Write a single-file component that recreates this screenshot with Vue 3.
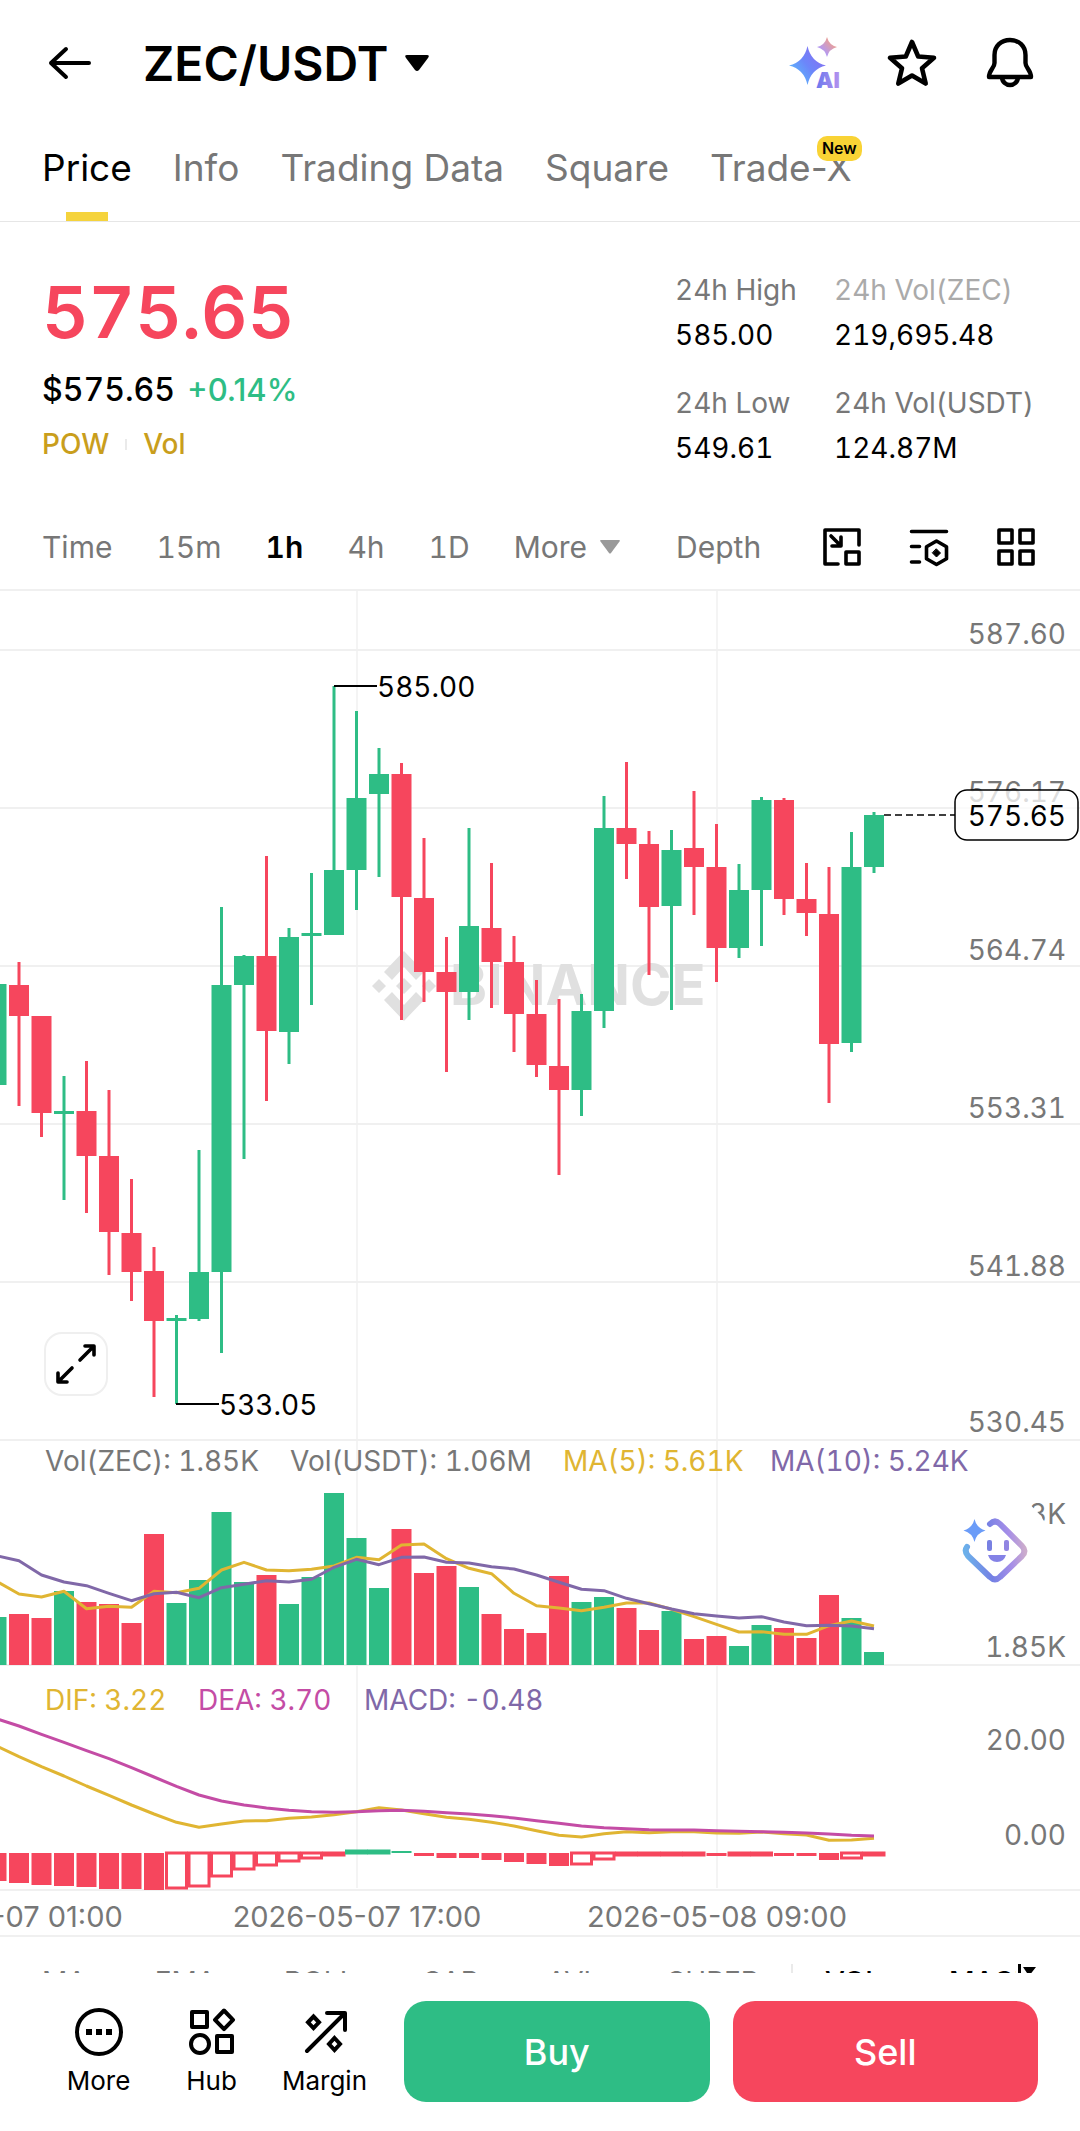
<script setup>
const tabs = ['Price', 'Info', 'Trading Data', 'Square', 'Trade-X']
const stats = [
  { label: '24h High', value: '585.00' },
  { label: '24h Vol(ZEC)', value: '219,695.48', faded: true },
  { label: '24h Low', value: '549.61' },
  { label: '24h Vol(USDT)', value: '124.87M' },
]
const intervals = ['Time', '15m', '1h', '4h', '1D']
const overlays = ['MA', 'EMA', 'BOLL', 'SAR', 'AVL', 'SUPER']

const UP = '#2ebd85'
const DOWN = '#f6465d'
const STEP = 22.5
const centre = (i) => 874 - (39 - i) * STEP

// [direction, high, body top, body bottom, low]
const candles = [
  [1, 984, 984, 1085, 1085], [0, 962, 985, 1016, 1106], [0, 1016, 1016, 1113, 1137],
  [1, 1076, 1111, 1114, 1200], [0, 1061, 1111, 1156, 1213], [0, 1090, 1156, 1232, 1275],
  [0, 1179, 1233, 1272, 1301], [0, 1247, 1271, 1321, 1397], [1, 1315, 1318, 1321, 1404],
  [1, 1150, 1272, 1319, 1321], [1, 907, 985, 1272, 1353], [1, 955, 956, 985, 1159],
  [0, 856, 956, 1031, 1101], [1, 928, 937, 1032, 1064], [1, 873, 933, 936, 1005],
  [1, 686, 870, 935, 935], [1, 711, 798, 870, 910], [1, 748, 774, 794, 877],
  [0, 763, 774, 897, 1020], [0, 838, 898, 972, 1002], [0, 937, 972, 992, 1072],
  [1, 828, 926, 992, 1020], [0, 863, 928, 962, 1008], [0, 936, 962, 1014, 1052],
  [0, 980, 1014, 1065, 1077], [0, 999, 1066, 1090, 1175], [1, 994, 1011, 1090, 1116],
  [1, 796, 828, 1011, 1028], [0, 762, 828, 844, 879], [0, 831, 844, 907, 975],
  [1, 830, 850, 906, 1010], [0, 791, 848, 867, 915], [0, 824, 867, 948, 982],
  [1, 864, 890, 948, 958], [1, 797, 800, 890, 946], [0, 798, 800, 899, 915],
  [0, 863, 899, 913, 936], [0, 867, 914, 1044, 1103], [1, 832, 867, 1043, 1052],
  [1, 812, 815, 867, 873],
].map(([up, high, top, bottom, low], i) => ({
  x: centre(i), color: up ? UP : DOWN, high, top, bottom, low,
}))

const volumes = [
  48, 51, 47, 74, 63, 61, 42, 131, 62, 85, 153, 83, 90, 61, 88, 172, 127, 77, 136, 92,
  99, 78, 51, 36, 32, 89, 63, 68, 57, 35, 54, 26, 29, 19, 40, 37, 27, 70, 47, 13,
]

const line = (base, values) =>
  values.map((v, i) => `${centre(i)},${(base + v / 3).toFixed(1)}`).join(' ')

const ma5 = line(1430, [
  454, 492, 501, 484, 536, 529, 532, 484, 488, 475, 420, 397, 420, 422, 418, 408, 382, 389, 345, 342,
  386, 415, 431, 490, 527, 534, 542, 532, 519, 519, 538, 560, 583, 606, 605, 613, 613, 587, 573, 588,
])
const ma10 = line(1430, [
  377, 392, 435, 456, 467, 490, 512, 491, 487, 503, 473, 463, 452, 456, 448, 412, 388, 404, 382, 381,
  397, 399, 410, 417, 435, 457, 478, 482, 505, 521, 537, 551, 558, 564, 560, 576, 587, 586, 588, 596,
])
const dif = line(1680, [
  198, 230, 260, 288, 318, 346, 375, 402, 427, 442, 432, 423, 422, 415, 411, 404, 395, 383, 390, 401,
  412, 418, 427, 438, 452, 466, 471, 461, 455, 458, 455, 455, 459, 460, 456, 461, 465, 481, 480, 475,
])
const dea = line(1680, [
  116, 138, 163, 187, 212, 236, 263, 291, 319, 345, 363, 375, 384, 391, 395, 397, 395, 392, 391, 394,
  398, 402, 407, 414, 422, 430, 438, 443, 446, 449, 450, 450, 452, 454, 455, 457, 459, 462, 466, 468,
])

// [height, hollow]; a negative height rises above the zero line
const histogram = [
  [28], [30], [32], [33], [34], [36], [36], [37], [35, 1], [33, 1], [23, 1], [16, 1], [12, 1], [8, 1],
  [5, 1], [2, 1], [-2, 1], [-2, 1], [-2], [3], [5], [5], [7], [9], [11], [13], [11, 1], [6, 1], [2, 1],
  [2, 1], [2, 1], [2, 1], [3], [2, 1], [2, 1], [3], [3], [7], [5, 1], [2, 1],
].map(([h, hollow], i) => ({
  x: centre(i) - 10,
  y: h < 0 ? 1853 + h : 1853,
  h: Math.abs(h),
  color: h < 0 ? UP : DOWN,
  hollow,
}))

const priceAxis = [
  [650, 644, '587.60'], [808, 802, '576.17'], [966, 960, '564.74'],
  [1124, 1118, '553.31'], [1282, 1276, '541.88'], [1440, 1432, '530.45'],
]
</script>

<template>
  <div class="app">
    <main class="content">
      <header class="topbar">
        <button class="icon-btn" aria-label="Back">
          <svg width="52" height="52" viewBox="0 0 52 52" fill="none" stroke="#000" stroke-width="4" stroke-linecap="round" stroke-linejoin="round">
            <path d="M47 26H9M24 12 9 26l15 14" />
          </svg>
        </button>
        <button class="pair">
          ZEC/USDT
          <svg width="26" height="18" viewBox="0 0 26 18"><path d="M3 1h20q3 0 1 3L15 16q-2 2-4 0L2 4Q0 1 3 1z" /></svg>
        </button>
        <div class="actions">
          <button class="icon-btn" aria-label="AI">
            <svg width="52" height="52" viewBox="0 0 52 52" overflow="visible">
              <defs>
                <linearGradient id="ai-main" x1="0" y1="1" x2="1" y2="0.2">
                  <stop offset="0.1" stop-color="#5ac0fb" /><stop offset="0.55" stop-color="#6c86fa" /><stop offset="1" stop-color="#8a6cf0" />
                </linearGradient>
                <linearGradient id="ai-small" x1="0" y1="1" x2="1" y2="0">
                  <stop offset="0.3" stop-color="#b59af0" /><stop offset="0.8" stop-color="#f0a08c" />
                </linearGradient>
                <linearGradient id="ai-text" x1="0" y1="0" x2="1" y2="0">
                  <stop offset="0" stop-color="#6a78ee" /><stop offset="1" stop-color="#b592ee" />
                </linearGradient>
              </defs>
              <path fill="url(#ai-main)" d="M19.500 9Q23 25 38 28.500Q23 32 19.500 48Q16 32 1 28.500Q16 25 19.500 9z" />
              <path fill="url(#ai-small)" d="M39 0q2 8 10 10q-8 2-10 10q-2-8-10-10q8-2 10-10z" />
              <text x="28" y="51" font-size="22" font-weight="900" fill="url(#ai-text)" stroke="#fff" stroke-width="3" paint-order="stroke">AI</text>
            </svg>
          </button>
          <button class="icon-btn" aria-label="Add to favourites">
            <svg width="52" height="52" viewBox="0 0 52 52" fill="none" stroke="#000" stroke-width="4.600" stroke-linejoin="round">
              <path d="M26 5l6.200 14.500 15.800 1.300-12 10.400 3.700 15.400L26 38.500 12.300 46.600 16 31.200 4 20.800l15.800-1.300z" />
            </svg>
          </button>
          <button class="icon-btn" aria-label="Alerts">
            <svg width="52" height="52" viewBox="0 0 52 52" fill="none" stroke="#000" stroke-width="4.400" stroke-linejoin="round">
              <path d="M26 3C17 3 10.500 9 10.500 18v8c0 5-5.500 7-5.500 14h42c0-7-5.500-9-5.500-14v-8C41.500 9 35 3 26 3z" />
              <path d="M18 40c0 5 4 8 8 8s8-3 8-8" />
            </svg>
          </button>
        </div>
      </header>

      <nav class="tabs">
        <a v-for="(t, i) in tabs" :key="t" href="#" class="tab" :class="{ active: i === 0 }">
          {{ t }}<span v-if="t === 'Trade-X'" class="badge">New</span>
        </a>
      </nav>

      <section class="summary">
        <div class="quote">
          <div class="last">575.65</div>
          <div class="fiat"><span>$575.65</span><span class="gain">+0.14%</span></div>
          <div class="tags"><a href="#">POW</a><i class="sep"></i><a href="#">Vol</a></div>
        </div>
        <dl class="stats">
          <div v-for="s in stats" :key="s.label" class="stat">
            <dt :class="{ faded: s.faded }">{{ s.label }}</dt>
            <dd>{{ s.value }}</dd>
          </div>
        </dl>
      </section>

      <div class="intervals">
        <button v-for="t in intervals" :key="t" class="interval" :class="{ active: t === '1h' }">{{ t }}</button>
        <button class="interval more">
          More
          <svg width="20" height="14" viewBox="0 0 20 14"><path fill="#999" d="M1 0h18q1.500 0 .5 1.500L11 13q-1 1-2 0L.5 1.500Q-.5 0 1 0z" /></svg>
        </button>
        <button class="interval depth">Depth</button>
        <div class="tools">
          <button class="icon-btn" aria-label="Floating window">
            <svg width="40" height="40" viewBox="0 0 40 40" fill="none" stroke="#000" stroke-width="3.600" stroke-linecap="round" stroke-linejoin="round">
              <path d="M37 18V3H3v34h13M9 9l9 9M10 19h9V10" /><rect x="24" y="25" width="13" height="12" />
            </svg>
          </button>
          <button class="icon-btn" aria-label="Chart settings">
            <svg width="40" height="40" viewBox="0 0 40 40" fill="none" stroke="#000" stroke-width="3.600" stroke-linecap="round" stroke-linejoin="round">
              <path d="M2.500 4.500h35M2.500 19.500h8M2.500 35h8M27.500 14l10 5.700v12l-10 5.800-10-5.800v-12z" />
              <path d="M27.500 22l4 4-4 4-4-4z" fill="#000" stroke-width="1" />
            </svg>
          </button>
          <button class="icon-btn" aria-label="Layout">
            <svg width="40" height="40" viewBox="0 0 40 40" fill="none" stroke="#000" stroke-width="3.600" stroke-linejoin="round">
              <rect x="3" y="3" width="13" height="13" /><rect x="24" y="3" width="13" height="13" />
              <rect x="3" y="24" width="13" height="13" /><rect x="24" y="24" width="13" height="13" />
            </svg>
          </button>
        </div>
      </div>

      <div class="chart">
        <svg class="plot" viewBox="0 589 1080 1348" role="img" aria-label="ZEC/USDT 1h chart">
          <g stroke="#f0f0f0" stroke-width="2">
            <line x1="0" x2="1080" y1="590" y2="590" />
            <line v-for="a in priceAxis" :key="a[0]" x1="0" x2="1080" :y1="a[0]" :y2="a[0]" />
            <line v-for="y in [1665, 1890, 1936]" :key="y" x1="0" x2="1080" :y1="y" :y2="y" />
            <line v-for="x in [357, 717]" :key="x" :x1="x" :x2="x" y1="590" y2="1888" stroke-width="1.500" />
          </g>

          <g fill="#e0e0e0">
            <path d="M404 951l20 21-8 8-12-13-12 13-8-8zM404 1021l20-21-8-8-12 13-12-13-8 8zM379 979l7 7-7 7-7-7zM429 979l7 7-7 7-7-7zM404 978l8 8-8 8-8-8z" />
            <text x="450" y="1005" class="mark">BINANCE</text>
          </g>

          <g class="axis">
            <text v-for="a in priceAxis" :key="a[2]" x="1066" :y="a[1]" text-anchor="end">{{ a[2] }}</text>
            <text x="1066" y="1524" text-anchor="end">3K</text>
            <text x="1066" y="1657" text-anchor="end">1.85K</text>
            <text x="1066" y="1750" text-anchor="end">20.00</text>
            <text x="1066" y="1845" text-anchor="end">0.00</text>
          </g>
          <g class="axis dates" text-anchor="middle">
            <text x="-3" y="1927">2026-05-07 01:00</text>
            <text x="357" y="1927">2026-05-07 17:00</text>
            <text x="717" y="1927">2026-05-08 09:00</text>
          </g>

          <g v-for="(c, i) in candles" :key="i" :fill="c.color">
            <rect :x="c.x - 1.5" :y="c.high" width="3" :height="c.low - c.high" />
            <rect :x="c.x - 10" :y="c.top" width="20" :height="c.bottom - c.top" />
            <rect :x="c.x - 10" :y="1665 - volumes[i]" width="20" :height="volumes[i]" />
          </g>

          <g class="lines">
            <polyline :points="ma5" stroke="#e0b532" />
            <polyline :points="ma10" stroke="#8068a8" />
            <polyline :points="dif" stroke="#e0b532" />
            <polyline :points="dea" stroke="#c44ca5" />
          </g>
          <rect
            v-for="(b, i) in histogram" :key="'h' + i" :x="b.x" :y="b.y" width="20" :height="b.h"
            :fill="b.hollow ? '#fff' : b.color" :stroke="b.hollow ? b.color : 'none'" stroke-width="3"
          />

          <g stroke="#000" stroke-width="2">
            <path d="M334 686h43M176 1404h43" />
            <path d="M884 815h71" stroke-width="1.500" stroke-dasharray="7 4" />
            <rect x="955" y="790" width="123" height="50" rx="12" fill="#fff" fill-opacity="0.75" stroke-width="1.500" />
          </g>
          <g class="price">
            <text x="377" y="697">585.00</text>
            <text x="219" y="1415">533.05</text>
            <text x="1066" y="826" text-anchor="end">575.65</text>
          </g>

          <g class="legend">
            <text x="45" y="1471" fill="#777">Vol(ZEC): 1.85K</text>
            <text x="290" y="1471" fill="#777">Vol(USDT): 1.06M</text>
            <text x="563" y="1471" fill="#e0b532">MA(5): 5.61K</text>
            <text x="770" y="1471" fill="#8068a8">MA(10): 5.24K</text>
            <text x="45" y="1710" fill="#e0b532">DIF: 3.22</text>
            <text x="198" y="1710" fill="#c44ca5">DEA: 3.70</text>
            <text x="364" y="1710" fill="#8068a8">MACD: -0.48</text>
          </g>
        </svg>
        <button class="expand" aria-label="Full screen">
          <svg width="60" height="60" viewBox="0 0 60 60" fill="none" stroke="#000" stroke-width="3.600" stroke-linecap="round" stroke-linejoin="round">
            <path d="M34 26 47 13M39 12h9v9M26 34 13 47M12 39v9h9" />
          </svg>
        </button>
        <button class="assistant" aria-label="AI assistant">
          <svg width="114" height="114" viewBox="0 0 114 114">
            <defs>
              <linearGradient id="bot" x1="0" y1="0.5" x2="1" y2="0.4">
                <stop offset="0" stop-color="#6cb0ea" /><stop offset="0.4" stop-color="#7480e4" /><stop offset="0.75" stop-color="#a68ee8" /><stop offset="1" stop-color="#ccaccc" />
              </linearGradient>
            </defs>
            <path d="M52 31q5-5 10 0l22 22q5 5 0 10L62 84q-5 5-10 0L30 63q-4-5-1-9" fill="none" stroke="url(#bot)" stroke-width="6" stroke-linecap="round" />
            <path fill="#6b9cf8" d="M36.500 26q2 9 11 11.500q-9 2.500-11 11.500q-2-9-11-11.500q9-2.500 11-11.500z" />
            <rect x="49" y="47" width="5" height="11" rx="2" fill="#7880e2" /><rect x="66" y="47" width="5" height="11" rx="2" fill="#9185e2" />
            <path d="M50 62h18q-2 7-9 7t-9-7z" fill="#8482e6" />
          </svg>
        </button>
      </div>

      <div class="indicators">
        <button v-for="o in overlays" :key="o">{{ o }}</button>
        <i class="bar"></i>
        <button class="on">VOL</button>
        <button class="on">MACD</button>
        <svg class="trend" width="22" height="40" viewBox="0 0 22 40"><path d="M2 0h3v40H2zM7 3h13l-7 9z" /></svg>
      </div>
    </main>

    <footer class="dock">
      <button class="dock-item">
        <svg width="48" height="48" viewBox="0 0 48 48" fill="none" stroke="#000" stroke-width="4">
          <circle cx="24" cy="24" r="22" />
          <path stroke="none" fill="#000" d="M11 21h6v6h-6zM21 21h6v6h-6zM31 21h6v6h-6z" />
        </svg>
        More
      </button>
      <button class="dock-item">
        <svg width="48" height="48" viewBox="0 0 48 48" fill="none" stroke="#000" stroke-width="4" stroke-linejoin="round">
          <rect x="4" y="4" width="15" height="15" /><path d="M36 2.500l9 9.300-9 9.300-9-9.300z" />
          <circle cx="12" cy="36" r="9" /><rect x="29" y="28" width="15" height="16" />
        </svg>
        Hub
      </button>
      <button class="dock-item">
        <svg width="48" height="48" viewBox="0 0 48 48" fill="none" stroke="#000" stroke-width="4">
          <path stroke-linecap="round" stroke-linejoin="round" d="M6 43 43 6M26 5h18v17" />
          <path d="M12.500 8.500l5.500 5.800-5.500 5.800L7 14.300zM33.500 30l5.500 6-5.500 6-5.500-6z" />
        </svg>
        Margin
      </button>
      <div class="trade">
        <button class="buy">Buy</button>
        <button class="sell">Sell</button>
      </div>
    </footer>
  </div>
</template>

<style>
body { margin: 0; background: #fff; }
</style>

<style scoped>
.app {
  display: flex;
  flex-direction: column;
  height: 100vh;
  background: #fff;
  color: #000;
  font-family: Inter, "Liberation Sans", sans-serif;
  font-size: 28px;
  font-variant-numeric: tabular-nums;
}
button {
  margin: 0;
  padding: 0;
  border: 0;
  background: none;
  color: inherit;
  font: inherit;
  font-variant-numeric: inherit;
  cursor: pointer;
}
a { color: inherit; text-decoration: none; }
svg { display: block; flex: none; }
.content { flex: 1; min-height: 0; overflow: hidden; }

.topbar { display: flex; align-items: center; height: 126px; padding: 0 44px 0 42px; }
.pair {
  display: flex;
  align-items: center;
  gap: 16px;
  margin-left: 49px;
  font-size: 48px;
  font-weight: 600;
}
.actions { display: flex; gap: 46px; margin-left: auto; }

.tabs {
  display: flex;
  gap: 41px;
  height: 77px;
  padding: 18px 42px 0;
  border-bottom: 1px solid #e6e6e6;
  color: #777;
  font-size: 37px;
  font-variant-numeric: normal;
  line-height: 48px;
}
.tab { position: relative; white-space: nowrap; }
.tab.active { color: #000; }
.tab.active::after {
  content: "";
  position: absolute;
  bottom: 0;
  left: 50%;
  width: 42px;
  height: 9px;
  margin-left: -21px;
  background: #f5d33c;
}
.badge {
  position: absolute;
  top: -8px;
  right: -10px;
  padding: 0 5px;
  border-radius: 10px;
  background: #f9d335;
  color: #000;
  font-size: 16px;
  font-weight: 600;
  line-height: 25px;
}

.summary { display: flex; height: 236px; padding: 46px 42px 0; }
.quote { flex: 1; padding-top: 4px; }
.last { color: #f6465d; font-size: 72px; font-weight: 600; line-height: 80px; }
.fiat { display: flex; gap: 12px; margin-top: 16px; font-size: 32px; font-weight: 500; line-height: 44px; }
.gain { color: #2ebd85; font-size: 31px; font-variant-numeric: normal; }
.tags { display: flex; align-items: center; margin-top: 12px; color: #c99e1c; font-weight: 500; line-height: 40px; }
.sep { width: 2px; height: 11px; margin: 0 16px; background: #eaeaea; }
.stats {
  display: grid;
  grid-template-columns: 159px 204px;
  row-gap: 23px;
  align-content: start;
  margin: 0;
  line-height: 45px;
  white-space: nowrap;
}
dt { color: #777; }
dt.faded { color: #aaa; }
dd { margin: 0; }

.intervals { display: flex; align-items: center; gap: 44px; height: 85px; padding: 0 44px 0 42px; color: #777; font-size: 30px; }
.interval.active { color: #000; font-weight: 600; }
.more { display: flex; align-items: center; gap: 13px; }
.depth { margin-left: 12px; }
.tools { display: flex; gap: 47px; margin-left: auto; }

.chart { position: relative; }
.plot { width: 100%; height: auto; font-size: 28px; }
.axis { fill: #777; }
.dates { font-size: 29px; font-variant-numeric: normal; }
.mark { font-size: 56px; font-weight: 700; }
.lines { fill: none; stroke-width: 3; stroke-linejoin: round; }
.expand {
  position: absolute;
  bottom: 541px;
  left: 44px;
  border: 2px solid #efefef;
  border-radius: 18px;
  background: #fff;
}
.assistant { position: absolute; right: 28px; bottom: 330px; border-radius: 50%; background: #fff; }

.indicators { position: relative; display: flex; align-items: center; gap: 68px; height: 90px; padding: 0 42px; color: #777; }
.indicators .on { color: #000; font-weight: 500; }
.bar { width: 2px; height: 36px; margin: 0 -36px; background: #eaeaea; }
.trend { position: absolute; top: 27px; right: 42px; background: #fff; }

.dock { display: flex; height: 101px; padding: 28px 42px 29px; background: #fff; }
.dock-item {
  display: flex;
  flex-direction: column;
  align-items: center;
  gap: 9px;
  width: 113px;
  padding-top: 7px;
  font-size: 26px;
  line-height: 32px;
}
.trade { display: flex; flex: 1; gap: 23px; margin-left: 23px; }
.trade button { flex: 1; border-radius: 22px; color: #fff; font-size: 36px; font-weight: 500; }
.trade .buy { background: #2ebd85; }
.trade .sell { background: #f6465d; }
</style>
